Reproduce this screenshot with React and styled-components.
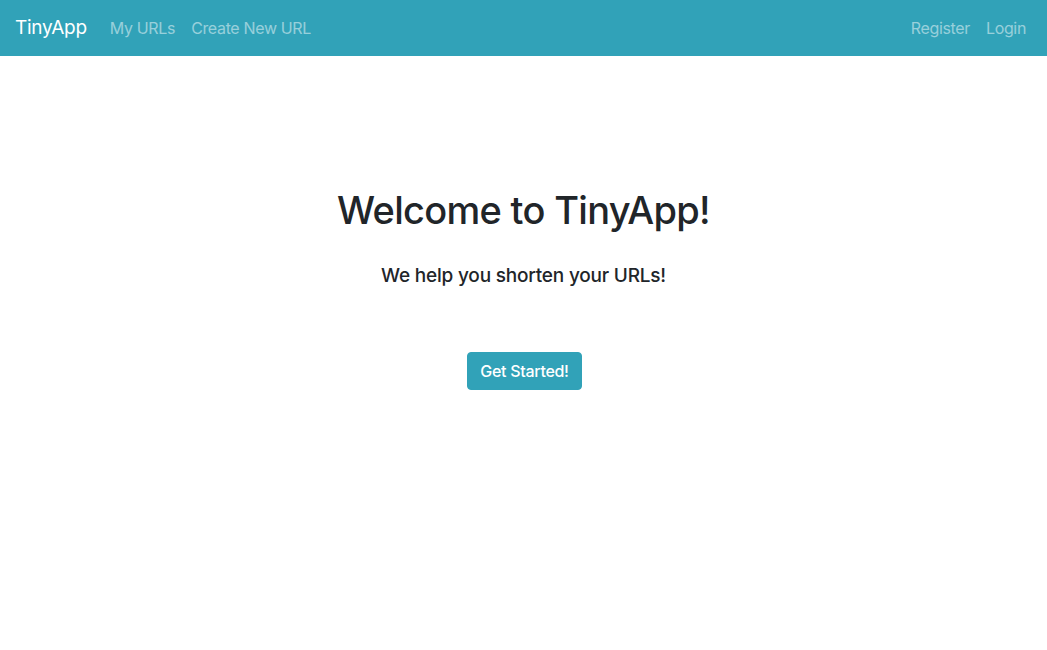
import React from 'react';
import styled, { createGlobalStyle } from 'styled-components';

const GlobalStyle = createGlobalStyle`
  * { box-sizing: border-box; }
  body {
    margin: 0;
    font-family: Inter, "Noto Sans", "Liberation Sans", sans-serif;
    font-size: 16px;
    line-height: 1.5;
    color: #212529;
    background: #fff;
  }
`;

const Navbar = styled.nav`
  display: flex;
  align-items: center;
  height: 56px;
  padding: 0 21px 0 15px;
  background-color: #31a2b8;
`;

const Brand = styled.a`
  font-size: 19px;
  color: #fff;
  text-decoration: none;
  margin-right: 23px;
  letter-spacing: -0.25px;
`;

const NavList = styled.div`
  display: flex;
  gap: 16px;
  margin-left: ${({ $right }) => ($right ? 'auto' : '0')};
`;

const NavLink = styled.a`
  font-size: 16px;
  color: rgba(255, 255, 255, 0.5);
  text-decoration: none;
  letter-spacing: -0.35px;
`;

const Main = styled.main`
  display: flex;
  flex-direction: column;
  align-items: center;
  padding-top: 131px;
`;

const Title = styled.h1`
  margin: 0;
  font-size: 38px;
  font-weight: 500;
  line-height: 1.26;
  letter-spacing: -0.7px;
`;

const Subtitle = styled.h5`
  margin: 30px 0 0;
  font-size: 19px;
  font-weight: 500;
  line-height: 1.2;
  letter-spacing: -0.2px;
`;

const Button = styled.button`
  margin-top: 64px;
  margin-left: 2px;
  height: 38px;
  padding: 0 12px;
  border: 1px solid #31a2b8;
  border-radius: 4px;
  background-color: #31a2b8;
  color: #fff;
  font-family: inherit;
  font-size: 16px;
  font-weight: 500;
  letter-spacing: -0.3px;
  cursor: pointer;
`;

export default function App() {
  return (
    <>
      <GlobalStyle />
      <Navbar>
        <Brand href="#">TinyApp</Brand>
        <NavList>
          <NavLink href="#">My URLs</NavLink>
          <NavLink href="#">Create New URL</NavLink>
        </NavList>
        <NavList $right>
          <NavLink href="#">Register</NavLink>
          <NavLink href="#">Login</NavLink>
        </NavList>
      </Navbar>
      <Main>
        <Title>Welcome to TinyApp!</Title>
        <Subtitle>We help you shorten your URLs!</Subtitle>
        <Button>Get Started!</Button>
      </Main>
    </>
  );
}
